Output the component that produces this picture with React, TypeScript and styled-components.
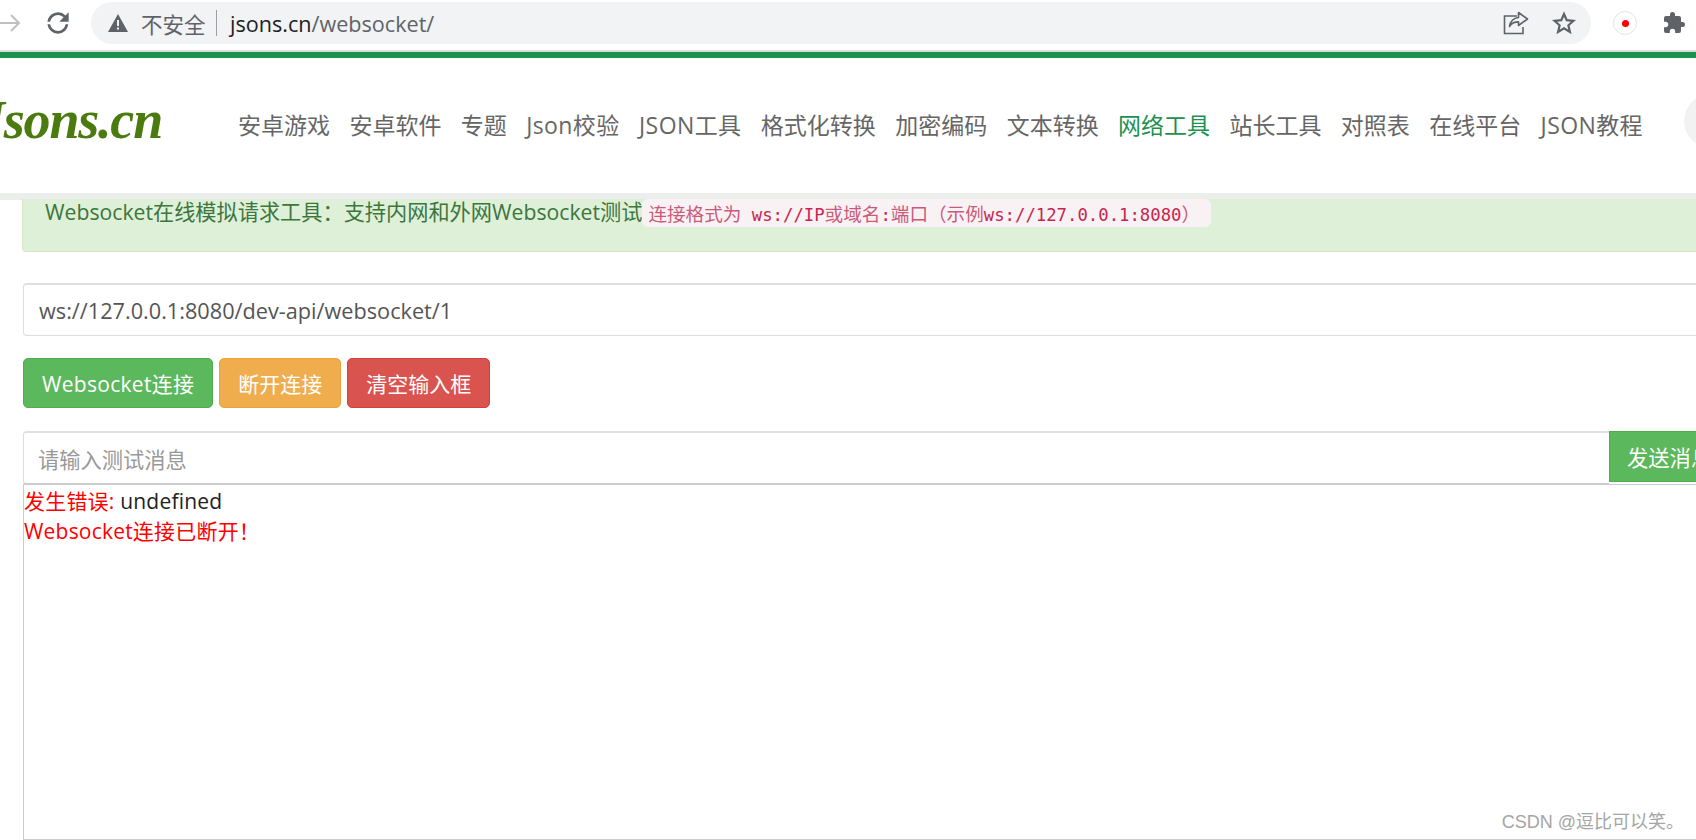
import React from 'react';
import styled, { createGlobalStyle } from 'styled-components';

const Global = createGlobalStyle`
  html, body { margin: 0; padding: 0; background: #fff; overflow: hidden; }
  body { font-family: "Open Sans", "Noto Sans CJK SC", sans-serif; }
  * { box-sizing: border-box; }
`;
const Page = styled.div`
  position: relative; width: 1696px; height: 840px; overflow: hidden; background: #fff;
  display: flex; flex-direction: column;
`;
const Chrome = styled.div`
  height: 50px; flex: none; display: flex; align-items: center; background: #fff;
`;
const NavIcons = styled.div`
  width: 91px; flex: none; display: flex; align-items: center; gap: 20px; margin-top: -4px;
  svg { flex: none; }
`;
const Omni = styled.div`
  width: 1500px; height: 42px; margin-top: -4px; border-radius: 21px; background: #f1f3f4; flex: none;
  display: flex; align-items: center; padding: 0 15px 0 17px;
`;
const Secure = styled.span`
  font-size: 21.5px; color: #5f6368; margin-left: 13px; font-family: "Noto Sans CJK SC", sans-serif;
`;
const Divider = styled.span` width: 1.5px; height: 26px; background: #9aa0a6; margin: 0 13px 0 10px; `;
const Host = styled.span` font-size: 21.6px; color: #202124; font-family: "Open Sans", sans-serif; `;
const Path = styled.span` color: #5f6368; `;
const OmniEnd = styled.div` margin-left: auto; display: flex; align-items: center; gap: 23px; `;
const Ext = styled.div`
  flex: none; width: 24px; height: 24px; margin: -4px 0 0 22px; border-radius: 50%; background: #fff; border: 1px solid #e4e4e4;
  display: flex; align-items: center; justify-content: center;
  &::after { content: ""; width: 7px; height: 7px; background: #f00; border-radius: 50%; }
`;
const Puzzle = styled.div` flex: none; margin: -4px 0 0 25px; display: flex; `;
const GreyRule = styled.div` height: 2px; background: #dcdcdc; flex: none; `;
const GreenRule = styled.div` position: relative; height: 6px; background: #1d9150; flex: none;
  &::after { content: ""; position: absolute; left: 1159px; top: 6px; border: 8px solid transparent; border-top-color: #1d9150; border-bottom: 0; }
`;
const Header = styled.header`
  height: 135px; flex: none; display: flex; align-items: center; background: #fff; position: relative;
`;
const Logo = styled.div`
  width: 253px; flex: none; margin-left: -22px; margin-bottom: 12px; font-family: "Liberation Serif", serif; font-weight: 700; font-style: italic;
  font-size: 54px; letter-spacing: -1.2px; color: #4b7a0e; line-height: 1; white-space: nowrap;
`;
const NavList = styled.nav` display: flex; gap: 19.4px; margin-left: 7px; margin-top: -2px; `;
const NavItem = styled.a<{ $active?: boolean; $latin?: boolean }>`
  font-size: 23px; color: ${(p) => (p.$active ? '#1d9150' : '#666')}; white-space: nowrap; line-height: 30px;
  letter-spacing: ${(p) => (p.$latin ? '.4px' : '0')};
`;
const Search = styled.div`
  position: absolute; left: 1684px; top: 36px; width: 60px; height: 54px; border-radius: 27px; background: #f2f2f2;
`;
const Band = styled.div` height: 7px; flex: none; background: #eceeec; `;
const Content = styled.main` flex: 1; padding-left: 23px; width: 1800px; display: flex; flex-direction: column; `;
const Alert = styled.div`
  height: 53px; flex: none; background: #dff0d8; border: 1px solid #d6e9c6; border-top: 0; border-radius: 0 0 4px 4px; color: #3c763d;
  font-size: 21.2px; padding: 0 0 0 22px; line-height: 26px; display: flex; align-items: flex-start; margin: -1px 0 0 -1px;
`;
const Code = styled.code`
  background: #f9f2f4; color: #c7254e; border-radius: 6px; font-family: "DejaVu Sans Mono", monospace;
  font-size: 17.3px; height: 28px; line-height: 27px; padding: 0 11px 0 6px; white-space: pre;
`;
const CodeCjk = styled.span` font-family: "Noto Sans CJK SC", sans-serif; font-size: 18.6px; color: #c95a7a; `;
const UrlInput = styled.div`
  margin-top: 31px; height: 53px; border: 1px solid #ddd; border-top: 2px solid #e0e0e0; border-radius: 4px; background: #fff;
  font-size: 21.7px; color: #555; padding-left: 15px; display: flex; align-items: center;
`;
const Buttons = styled.div` display: flex; gap: 6px; margin-top: 22px; `;
const Btn = styled.button<{ $bg: string; $border: string; $latin?: boolean }>`
  height: 50px; padding: 0 18px; border-radius: 5px; border: 1px solid ${(p) => p.$border}; background: ${(p) => p.$bg};
  color: #fff; font-size: 21px; font-family: "Open Sans", "Noto Sans CJK SC", sans-serif; white-space: nowrap;
  letter-spacing: ${(p) => (p.$latin ? '.3px' : '0')};
`;
const MsgRow = styled.div` display: flex; margin-top: 23px; height: 54px; `;
const MsgInput = styled.div`
  width: 1586px; height: 100%; flex: none; border: 1px solid #ddd; border-top: 2px solid #e0e0e0; border-right: 0; border-bottom: 2px solid #ccc; border-radius: 4px 0 0 4px;
  font-size: 21.25px; color: #999; padding-left: 14px; display: flex; align-items: center;
`;
const SendBtn = styled.button`
  height: 51px; width: 130px; flex: none; background: #5cb85c; border: 1px solid #4cae4c; color: #fff; font-size: 21.3px; text-align: left; padding: 0 0 0 17px;
  font-family: "Open Sans", "Noto Sans CJK SC", sans-serif; white-space: nowrap;
`;
const Output = styled.div`
  flex: 1; border: 1px solid #ccc; border-right: 0; margin-top: -1px; padding-top: 1px; font-size: 21px; letter-spacing: .2px; line-height: 30px; color: #222;
`;
const Red = styled.span` color: #f00; `;
const Watermark = styled.div`
  position: absolute; right: 12px; bottom: 7px; font-size: 18px; color: #a5a5a5; font-family: "Liberation Sans", "Noto Sans CJK SC", sans-serif;
`;

const navs = ['安卓游戏','安卓软件','专题','Json校验','JSON工具','格式化转换','加密编码','文本转换','网络工具','站长工具','对照表','在线平台','JSON教程'];

export default function App() {
  return (
    <Page>
      <Global />
      <Chrome>
        <NavIcons>
          <svg width="22" height="24" viewBox="0 0 22 24" fill="none" stroke="#bdc1c6" strokeWidth="2"><path d="M-2 12H19M11 4l8 8-8 8" /></svg>
          <svg width="32" height="32" viewBox="0 0 24 24" fill="#5f6368"><path d="M17.65 6.35A8 8 0 0 0 4.07 11h2.02A6 6 0 0 1 12 6c1.66 0 3.14.69 4.22 1.78L13 11h7V4l-2.35 2.35zM17.7 13A6 6 0 0 1 12 18a6 6 0 0 1-5.91-5H4.07A8 8 0 0 0 12 20a8 8 0 0 0 7.74-7h-2.04z" /></svg>
        </NavIcons>
        <Omni>
          <svg width="20" height="18" viewBox="0 0 20 18" fill="#5f6368"><path d="M10 0 20 18H0zM9 6v6h2V6zM9 13.5v2h2v-2z" fillRule="evenodd" /></svg>
          <Secure>不安全</Secure>
          <Divider />
          <Host>jsons.cn<Path>/websocket/</Path></Host>
          <OmniEnd>
            <svg width="26" height="24" viewBox="0 0 26 24" fill="none" stroke="#5f6368" strokeWidth="1.6"><path d="M14 5H1.5v17.5H20V16" /><path d="M15.5 1.5 24.5 8l-9 6.5v-3.6c-4 0-7 1.3-9 4.6.8-5 3.7-8.4 9-9z" strokeLinejoin="round" /></svg>
            <svg width="24" height="24" viewBox="0 0 24 24" fill="none" stroke="#5f6368" strokeWidth="2.2"><path d="m12 3 2.7 6.2 6.8.6-5.1 4.5 1.5 6.6L12 17.4l-5.9 3.5 1.5-6.6-5.1-4.5 6.8-.6z" /></svg>
          </OmniEnd>
        </Omni>
        <Ext />
        <Puzzle>
          <svg width="24" height="24" viewBox="0 0 24 24" fill="#5f6368"><path d="M20.5 11H19V7a2 2 0 0 0-2-2h-4V3.5a2.5 2.5 0 0 0-5 0V5H4a2 2 0 0 0-2 2v3.8h1.5a2.7 2.7 0 0 1 0 5.4H2V20a2 2 0 0 0 2 2h3.8v-1.5a2.7 2.7 0 0 1 5.4 0V22H17a2 2 0 0 0 2-2v-4h1.5a2.5 2.5 0 0 0 0-5z" /></svg>
        </Puzzle>
      </Chrome>
      <GreyRule />
      <GreenRule />
      <Header>
        <Logo>Jsons.cn</Logo>
        <NavList>
          {navs.map((n) => <NavItem key={n} $active={n === '网络工具'} $latin={/[a-zA-Z]/.test(n)}>{n}</NavItem>)}
        </NavList>
        <Search />
      </Header>
      <Band />
      <Content>
        <Alert>
          Websocket在线模拟请求工具：支持内网和外网Websocket测试
          <Code><CodeCjk>连接格式为</CodeCjk> ws://IP<CodeCjk>或域名</CodeCjk>:<CodeCjk>端口（示例</CodeCjk>ws://127.0.0.1:8080<CodeCjk>）</CodeCjk></Code>
        </Alert>
        <UrlInput>ws://127.0.0.1:8080/dev-api/websocket/1</UrlInput>
        <Buttons>
          <Btn $bg="#5cb85c" $border="#4cae4c" $latin>Websocket连接</Btn>
          <Btn $bg="#f0ad4e" $border="#eea236">断开连接</Btn>
          <Btn $bg="#d9534f" $border="#d43f3a">清空输入框</Btn>
        </Buttons>
        <MsgRow>
          <MsgInput>请输入测试消息</MsgInput>
          <SendBtn>发送消息</SendBtn>
        </MsgRow>
        <Output>
          <div><Red>发生错误:</Red> undefined</div>
          <div><Red>Websocket连接已断开！</Red></div>
        </Output>
      </Content>
      <Watermark>CSDN @逗比可以笑。</Watermark>
    </Page>
  );
}
